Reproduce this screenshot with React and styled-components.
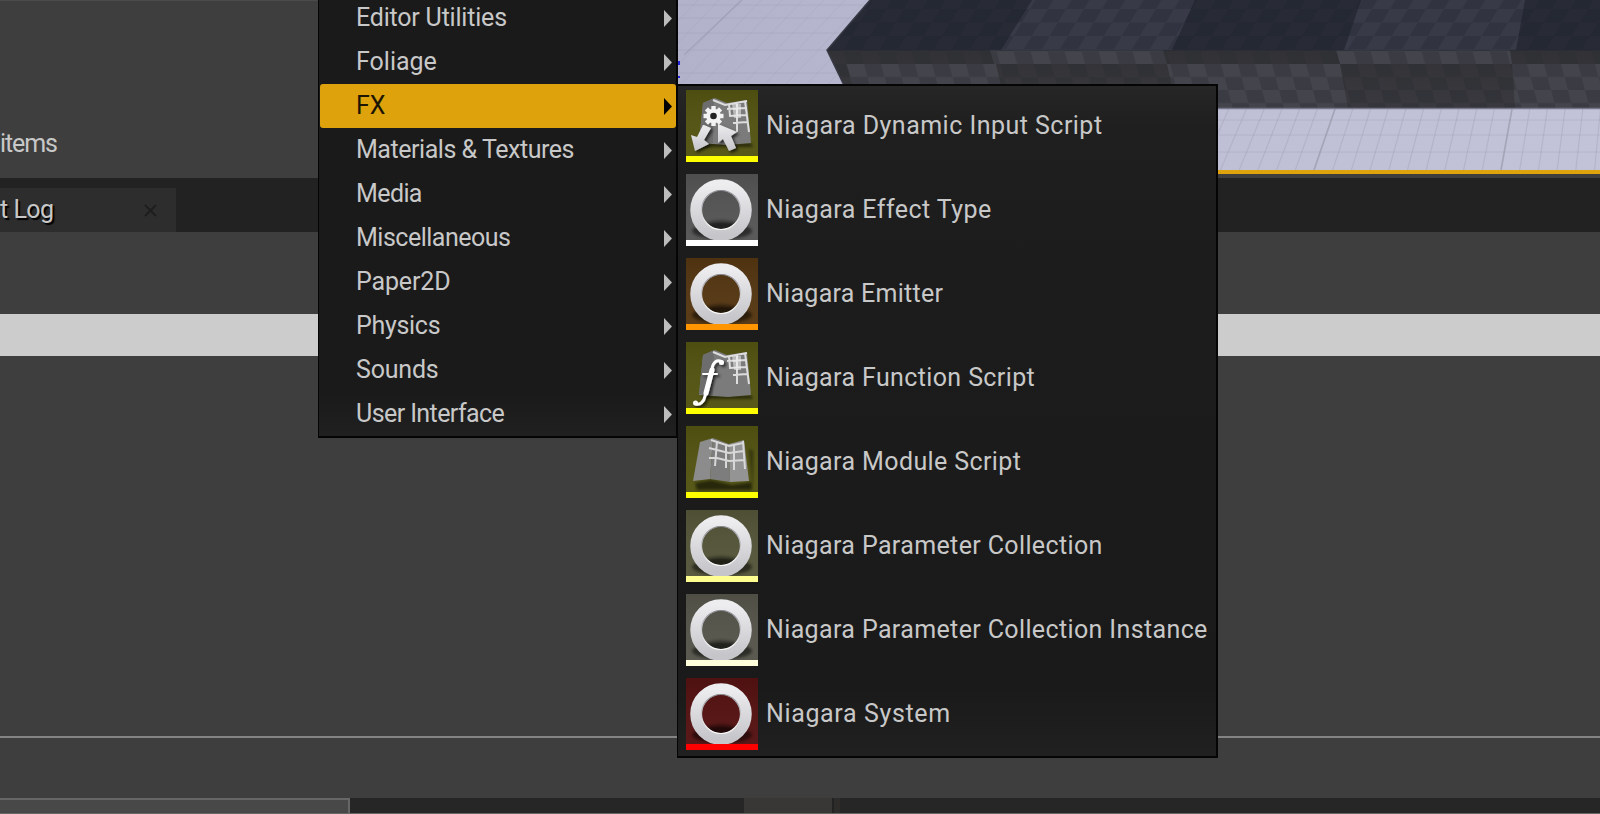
import React from "react";
import styled, { createGlobalStyle } from "styled-components";

const GlobalStyle = createGlobalStyle`
  * { box-sizing: border-box; }
  html, body { margin: 0; background: #3e3e3e; overflow: hidden; }
  body { font-family: Roboto, "Liberation Sans", sans-serif; font-size: 25px; color: #c8c8c8; }
`;

const Editor = styled.main`
  position: relative;
  display: flex;
  flex-direction: column;
  width: 1600px;
  height: 814px;
  overflow: hidden;
  background: #3e3e3e;
`;

const TopRow = styled.div`
  display: flex;
  height: 178px;
  flex: none;
`;

const AssetPanel = styled.section`
  width: 678px;
  border-top: 1px solid #4a4a4a;
  padding-top: 128px;
`;

const Caption = styled.span`
  display: block;
  line-height: 30px;
  white-space: nowrap;
  letter-spacing: ${(p) => p.$spacing || 0}px;
  margin-left: ${(p) => p.$shift || 0}px;
  text-shadow: ${(p) => (p.$shadow ? "2px 2px 1px #000" : "none")};
`;

const Viewport = styled.section`
  width: 922px;
  height: 174px;
  border-bottom: 4px solid #dda20c;
  svg { display: block; }
`;

const TabStrip = styled.div`
  display: flex;
  align-items: flex-end;
  height: 54px;
  flex: none;
  background: #222;
`;

const Tab = styled.div`
  display: flex;
  align-items: center;
  justify-content: space-between;
  width: 176px;
  height: 44px;
  padding: 0 19px 0 0;
  background: #2d2d2d;
`;

const LogBody = styled.section`
  display: flex;
  flex-direction: column;
  height: 566px;
  flex: none;
  padding-top: 82px;
`;

const SearchField = styled.div`
  height: 42px;
  background: #ccc;
`;

const Rule = styled.div`
  height: 2px;
  margin-top: 380px;
  background: #848484;
`;

const BottomStrip = styled.div`
  display: flex;
  height: 16px;
  flex: none;
  border-bottom: 1px solid #6a6666;
`;

const StripPart = styled.div`
  width: ${(p) => p.$width}px;
  background: ${(p) => p.$color};
  border: solid #666;
  border-width: ${(p) => (p.$edge ? "2px 2px 0 0" : "0")};
`;

const Menu = styled.nav`
  position: absolute;
  left: 318px;
  top: -6px;
  width: 360px;
  height: 444px;
  padding: 2px 0 0 1px;
  border: solid #050505;
  border-width: 0 2px 2px 1px;
  background: linear-gradient(#1a1a1a 90%, #202020);
`;

const MenuItem = styled.div`
  display: flex;
  align-items: center;
  justify-content: space-between;
  height: 44px;
  padding: 0 4px 0 36px;
  border-radius: 3px;
  color: ${(p) => (p.$active ? "#1c1503" : "#c8c8c8")};
  background: ${(p) => (p.$active ? "#dda20c" : "transparent")};
`;

const Arrow = styled.svg`
  width: 8px;
  height: 17px;
  fill: ${(p) => (p.$active ? "#000" : "#bdbdbd")};
`;

const SubMenu = styled.nav`
  position: absolute;
  left: 677px;
  top: 84px;
  width: 541px;
  height: 674px;
  padding: 4px 0 0 8px;
  display: flex;
  flex-direction: column;
  gap: 12px;
  border: 2px solid #050505;
  border-left-width: 1px;
  background: linear-gradient(#262626, #1f1f1f 6%, #1c1c1c 25%, #1a1a1a 90%, #202020);
`;

const AssetItem = styled.div`
  display: flex;
  align-items: center;
  gap: 8px;
  height: 72px;
`;

const Thumb = styled.svg`
  display: block;
  width: 72px;
  height: 72px;
  flex: none;
`;

const categories = [
  ["Editor Utilities", -0.2],
  ["Foliage", 0],
  ["FX", 0],
  ["Materials & Textures", -0.46],
  ["Media", -0.6],
  ["Miscellaneous", -0.5],
  ["Paper2D", -0.15],
  ["Physics", -0.3],
  ["Sounds", -0.2],
  ["User Interface", -0.58],
];

const assets = [
  ["Niagara Dynamic Input Script", "dynamic", "#535411", "#ffff00", 0.47],
  ["Niagara Effect Type", "ring", "#555555", "#ffffff", 0.43],
  ["Niagara Emitter", "ring", "#553611", "#ff9500", 0.27],
  ["Niagara Function Script", "function", "#535411", "#ffff00", 0.38],
  ["Niagara Module Script", "module", "#535411", "#ffff00", 0.39],
  ["Niagara Parameter Collection", "ring", "#55553a", "#ffff91", 0.37],
  ["Niagara Parameter Collection Instance", "ring", "#55554b", "#ffffdc", 0.37],
  ["Niagara System", "ring", "#551111", "#ff0000", 0.64],
];

function Ring() {
  return (
    <>
      <ellipse cx="36" cy="57" rx="30" ry="8" fill="#000" opacity=".5" filter="url(#soft)" />
      <ellipse cx="35" cy="52" rx="18" ry="6" fill="url(#innerShade)" filter="url(#soft)" />
      <path d="M18 52a22 9 0 0 1 34 0v6H18z" fill="url(#base)" opacity=".25" />
      <circle cx="35" cy="36" r="25" fill="none" stroke="url(#ring)" strokeWidth="11.5" />
      <circle cx="35" cy="36" r="19.5" fill="none" stroke="url(#rim)" strokeWidth="1.2" />
    </>
  );
}

function Sheet({ variant }) {
  if (variant === "module") {
    return (
      <>
        <path d="M9 57l16-3 21 5 20-3v8H11z" fill="#000" opacity=".55" filter="url(#soft)" />
        <path d="M66 56l-3-33 4 2v31z" fill="#000" opacity=".4" filter="url(#soft)" />
        <path d="M14 16L27 12 24 53 7 55z" fill="#8c8c8c" />
        <path d="M27 12l16 6 1 38-20-3z" fill="#7d7d7d" />
        <path d="M43 18l15-4 5 41-19 1z" fill="#949494" />
        <path d="M25 14l6 2 12 4 14-3M23 22l8 2 12 3 15-2M23 32l8 0 12 3 16-1M31 15l-2 25M40 18v24M48 18v26M57 15l2 28" fill="none" stroke="#d8d8d8" strokeWidth="2" />
      </>
    );
  }
  return (
    <>
      <path d="M15 52l50 1 2 4H17zM63 24l4 26" fill="#000" opacity=".5" filter="url(#soft)" />
      <path d="M17 13l12-5 12 5 20-3 4 43-23 2-29-2z" fill="#7b7b7b" />
      <path d="M28 8l-1 45-14-1 4-39z" fill="#6d6d6d" />
      <path d="M27 10l12 5 22-4M41 19l20-1M43 26l18-1M47 33l14-1M43 14l1 12M51 12v30M59 11l4 31" fill="none" stroke="#ddd" strokeWidth="2" />
      <path d="M46 14h9v14h-7z" fill="#eee" opacity=".55" />
    </>
  );
}

function Gear() {
  return (
    <>
      <g transform="translate(27.5 26)" fill="#f3f3f3">
        {[0, 45, 90, 135].map((a) => (
          <rect key={a} x="-2.2" y="-10" width="4.4" height="20" transform={`rotate(${a})`} />
        ))}
        <circle r="7.3" />
        <circle r="3.3" fill="#222" />
      </g>
      <g filter="url(#drop)" fill="url(#ring)">
        <path d="M18 35l7 3-7 12 5 4L9 61 5 45l6 2 6-12z" />
        <path d="M32 34l19 8-6 4 5 12-7 3-6-12-5 4z" />
      </g>
    </>
  );
}

function FunctionMark() {
  return (
    <g filter="url(#drop)" fill="none" stroke="#fff" strokeLinecap="round">
      <path d="M36 20c-5-3-9 0-10 7L19 54c-1 6-5 9-9 8" strokeWidth="3" />
      <path d="M26 28L20 51" strokeWidth="5" />
      <path d="M17 32h14" strokeWidth="2" />
      <circle cx="35.5" cy="20.5" r="1" strokeWidth="3" />
      <circle cx="9.5" cy="61" r="1" strokeWidth="3" />
    </g>
  );
}

function AssetThumb({ kind, color, accent }) {
  return (
    <Thumb viewBox="0 0 72 72">
      <rect width="72" height="72" fill={color} />
      <rect width="72" height="72" fill="url(#shade)" />
      {kind === "ring" ? <Ring /> : <Sheet variant={kind} />}
      {kind === "dynamic" && <Gear />}
      {kind === "function" && <FunctionMark />}
      <rect y="66" width="72" height="6" fill={accent} />
    </Thumb>
  );
}

function Defs() {
  return (
    <>
      <linearGradient id="ring" x1="0" y1="0" x2="0" y2="1">
        <stop offset="0" stopColor="#ededf0" />
        <stop offset="1" stopColor="#c6c6ca" />
      </linearGradient>
      <linearGradient id="rim" x1="0" y1="0" x2="0" y2="1">
        <stop offset="0" stopColor="#85858c" />
        <stop offset=".5" stopColor="#c8c8cc" />
        <stop offset="1" stopColor="#fafafa" />
      </linearGradient>
      <linearGradient id="innerShade" x1="0" y1="0" x2="0" y2="1">
        <stop offset="0" stopColor="#000" stopOpacity=".4" />
        <stop offset="1" stopColor="#000" stopOpacity="0" />
      </linearGradient>
      <linearGradient id="base" x1="0" y1="0" x2="0" y2="1">
        <stop offset="0" stopColor="#000" stopOpacity=".6" />
        <stop offset="1" stopColor="#000" stopOpacity="0" />
      </linearGradient>
      <linearGradient id="shade" x1="0" y1="0" x2="0" y2="1">
        <stop offset="0" stopColor="#000" stopOpacity=".08" />
        <stop offset="1" stopColor="#fff" stopOpacity=".03" />
      </linearGradient>
      <filter id="soft" x="-30%" y="-60%" width="160%" height="220%"><feGaussianBlur stdDeviation="1.5" /></filter>
      <filter id="drop" x="-30%" y="-30%" width="170%" height="170%">
        <feDropShadow dx="2" dy="2" stdDeviation="1.5" floodColor="#000" floodOpacity=".7" />
      </filter>
    </>
  );
}

function Scene() {
  const near = [];
  for (let i = -8; i < 17; i++) {
    near.push(<line key={i} x1={1335 + i * 17.7} y1="109" x2={1314 + i * 18.7} y2="170" />);
  }
  const far = [];
  for (let i = 0; i < 20; i++) {
    far.push(<line key={i} x1={i * 21 - 60} y1="84" x2={i * 21 + 20} y2="0" />);
  }
  return (
    <svg width="922" height="170" viewBox="678 0 922 170">
      <defs>
        <Defs />
        <linearGradient id="floor"><stop offset="0" stopColor="#b2b2cb" /><stop offset=".6" stopColor="#bfc0d6" /><stop offset="1" stopColor="#c2c3d8" /></linearGradient>
        <linearGradient id="front" x1="0" y1="0" x2="0" y2="1"><stop offset="0" stopColor="#323236" /><stop offset="1" stopColor="#39393f" /></linearGradient>
        <pattern id="topCheck" width="36" height="27" patternUnits="userSpaceOnUse" patternTransform="translate(1120 9) skewX(-31)">
          <path d="M0 0h18v13.5H0zM18 13.5h18V27H18z" fill="#1b1f2b" opacity=".24" />
        </pattern>
        <pattern id="frontCheck" width="34" height="26" patternUnits="userSpaceOnUse" patternTransform="translate(1170 64) skewX(15)">
          <path d="M0 0h17v13H0zM17 13h17v13H17z" fill="#292a2d" opacity=".3" />
        </pattern>
        <clipPath id="topFace"><path d="M870 0H1600V50H827z" /></clipPath>
        <clipPath id="frontFace"><path d="M827 50H1600V108H855z" /></clipPath>
      </defs>
      <rect x="678" width="922" height="170" fill="url(#floor)" />
      <g stroke="#9494a8" strokeWidth="1" opacity=".2" transform="translate(678 0)">{far}</g>
      <g stroke="#9494a8" strokeWidth="1" opacity=".28">
        {[5, 18, 33, 50, 73].map((y) => <line key={y} x1="678" x2="870" y1={y} y2={y} />)}
        {[120, 135, 152].map((y) => <line key={y} x1="1200" x2="1600" y1={y} y2={y} />)}
      </g>
      <path d="M742 0L684 55" stroke="#9090a3" strokeWidth="1.4" opacity=".45" />
      <g stroke="#9191a2" strokeWidth="1.2" opacity=".28">{near}</g>
      <path d="M1335 109L1314 170M1512 109L1501 170" stroke="#8e8e9b" strokeWidth="1.8" opacity=".4" />
      <g clipPath="url(#topFace)">
        <rect x="820" width="780" height="51" fill="#282b36" />
        <path d="M1032 0h163l-23 50h-171zM1361 0h164l-9 50h-172z" fill="#383a48" />
        <rect x="820" width="780" height="51" fill="url(#topCheck)" />
      </g>
      <g clipPath="url(#frontFace)">
        <rect x="820" y="50" width="780" height="58" fill="url(#front)" />
        <path d="M990 50h173l4 14H994zM1336 50h174l2 14h-172zM846 64h150l10 44H860zM1167 64h173l8 44h-171zM1512 64h88v44h-85z" fill="#44444c" />
        <rect x="820" y="50" width="780" height="58" fill="url(#frontCheck)" />
        <path d="M820 50h780" stroke="#292b34" />
      </g>
      <path d="M870 0L827 50l28 58" fill="none" stroke="#393946" strokeWidth="1.5" />
      <path d="M1218 108.5H1600" stroke="#77778b" strokeWidth="1.5" />
      <path d="M678 61v4M678 76v2" stroke="#2424dc" strokeWidth="4" />
    </svg>
  );
}

export default function App() {
  return (
    <>
      <GlobalStyle />
      <Editor>
        <TopRow>
          <AssetPanel><Caption $spacing={-1.1}>items</Caption></AssetPanel>
          <Viewport><Scene /></Viewport>
        </TopRow>
        <TabStrip>
          <Tab>
            <Caption $shadow $spacing={-0.5}>t Log</Caption>
            <svg width="13" height="13" viewBox="0 0 13 13"><path d="M1 1l11 11M12 1L1 12" stroke="#1d1d1d" strokeWidth="1.8" /></svg>
          </Tab>
        </TabStrip>
        <LogBody>
          <SearchField />
          <Rule />
        </LogBody>
        <BottomStrip>
          <StripPart $width={350} $color="#484848" $edge />
          <StripPart $width={394} $color="#262626" />
          <StripPart $width={88} $color="#393735" />
          <StripPart $width={2} $color="#222222" />
          <StripPart $width={6} $color="#2d2c2b" />
          <StripPart $width={760} $color="#262626" />
        </BottomStrip>
        <Menu>
          {categories.map(([name, spacing]) => (
            <MenuItem key={name} $active={name === "FX"}>
              <Caption $spacing={spacing}>{name}</Caption>
              <Arrow viewBox="0 0 8 17" $active={name === "FX"}><path d="M0 0l8 8.5L0 17z" /></Arrow>
            </MenuItem>
          ))}
        </Menu>
        <SubMenu>
          {assets.map(([name, kind, color, accent, spacing]) => (
            <AssetItem key={name}>
              <AssetThumb kind={kind} color={color} accent={accent} />
              <Caption $spacing={spacing}>{name}</Caption>
            </AssetItem>
          ))}
        </SubMenu>
      </Editor>
    </>
  );
}
